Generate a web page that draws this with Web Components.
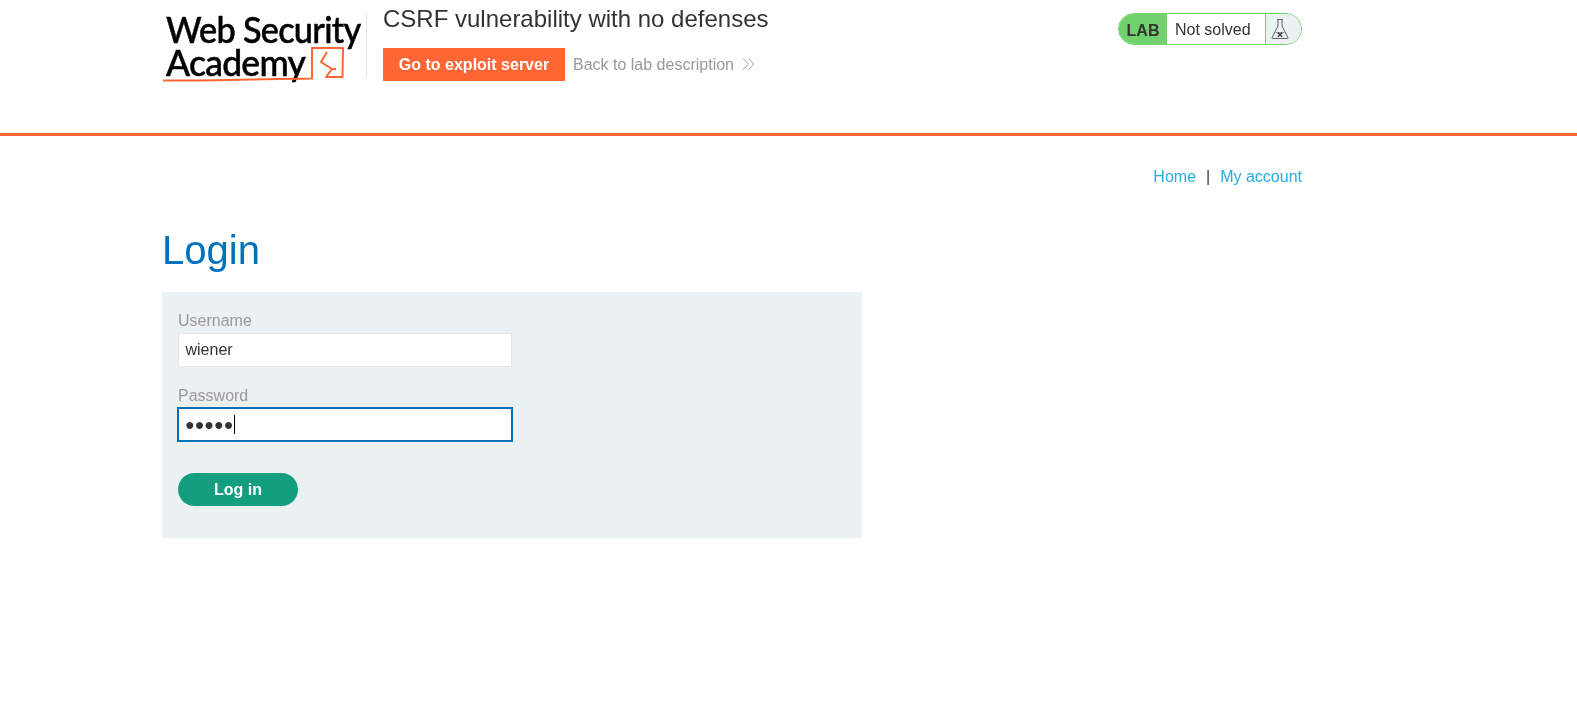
<!DOCTYPE html>
<html><head><meta charset="utf-8">
<style>
html,body{margin:0;padding:0;background:#fff;font-family:"Liberation Sans",Arial,sans-serif;color:#333332;font-size:16px}
</style></head><body>
<template id="t-logo"><style>
:host{display:block;position:relative;width:204px;flex:none;font-family:Lato,"Open Sans",sans-serif;color:#000;border-right:1px solid #e6e6e6;margin-top:12px;height:65px}
.l{font-size:37px;line-height:33px;letter-spacing:-.8px;font-weight:500;white-space:nowrap;margin-left:4px;transform-origin:0 50%;-webkit-text-stroke:.5px #000}
.a{transform:scaleX(.928)}.b{transform:scaleX(.96)}
svg{position:absolute;left:0;top:30px;overflow:visible}
</style><div class="l a">Web Security</div><div class="l b">Academy</div>
<svg width="182" height="45" viewBox="0 0 182 45" fill="none" stroke="#ff6633" stroke-width="2" stroke-linejoin="round"><path d="M1 38.500C40 39 100 37 150 36.500V6L181 6L180.500 35L164 35L170 27L159 20L165 10M170 27H174"/></svg></template>
<template id="t-status"><style>
:host{display:flex;height:32px;box-sizing:border-box;border:1px solid #70d16d;border-radius:16px;overflow:hidden;margin-top:13px;width:184px;background:#fff}
.lab{background:#70d16d;font-weight:700;width:48px;display:flex;align-items:center;justify-content:center;padding-top:3px;box-sizing:border-box}
.txt{flex:1;padding:1px 0 0 8px;display:flex;align-items:center}
.ic{width:36px;background:#ebf0f2;border-left:1px solid #70d16d;display:flex;align-items:center;padding-left:5px;box-sizing:border-box}
</style><div class="lab">LAB</div><div class="txt">Not solved</div><div class="ic"><svg width="18" height="22" viewBox="0 0 18 22" fill="none" stroke="#555" stroke-width=".9"><path d="M6 1.500h6M7 1.500v6.500L1.200 19.500c-.3.700 0 1 .8 1h14c.8 0 1.100-.3.800-1L11 8V1.500"/><path d="M3.500 14.500h11" stroke="#999"/><path d="M6.800 14.500l4.400 4.400M11.200 14.500l-4.400 4.400" stroke="#333332" stroke-width="1.300"/></svg></div></template>
<template id="t-header"><style>
:host{display:block;height:133px;border-bottom:3px solid #ff6633}
.in{display:flex;margin-left:162px;width:1140px}
.mid{margin-left:16px;flex:1}
h2{margin:0;font-weight:400;font-size:24px;line-height:38px;color:#333332}
.row{display:flex;align-items:center;margin-top:10px}
.btn{background:#ff6633;color:#fff;font-weight:700;height:33px;width:182px;display:flex;align-items:center;justify-content:center;white-space:nowrap}
.back{color:#999;margin-left:8px;display:flex;align-items:center;gap:8px}
.back svg{margin-top:-2px}
</style><div class="in"><acad-logo></acad-logo><div class="mid"><h2>CSRF vulnerability with no defenses</h2><div class="row"><div class="btn">Go to exploit server</div><div class="back">Back to lab description<svg width="13" height="14" viewBox="0 0 14 14" fill="none" stroke="#999" stroke-width="1"><path d="M1 1l6 6-6 6M7 1l6 6-6 6"/></svg></div></div></div><lab-status></lab-status></div></template>
<template id="t-nav"><style>
:host{display:flex;justify-content:flex-end;margin:32px 0 0 162px;width:1140px;line-height:18px;gap:10px;color:#333332}
a{color:#29abe2;text-decoration:none}
</style><a>Home</a><span>|</span><a>My account</a></template>
<template id="t-form"><style>
:host{display:block;margin-left:162px;width:700px;height:246px;box-sizing:border-box;background:#ebf0f2;padding:20px 16px 0}
label{display:block;color:#999;line-height:18px}
.f{box-sizing:border-box;width:334px;height:34px;background:#fff;border:1px solid #e6e6e6;padding:0 6.500px;display:flex;align-items:center;margin-top:3px;margin-bottom:20px;color:#333332}
.pw{border-color:#0071bc;box-shadow:0 0 0 1px #0071bc;height:33px;margin-bottom:0;padding:0 6px}
.dots{font-size:16px;white-space:nowrap}
.caret{width:1px;height:19px;background:#000;margin-left:1px}
.go{margin-top:32px;width:120px;height:33px;border-radius:17px;background:#129e7f;color:#fff;font-weight:700;display:flex;align-items:center;justify-content:center}
</style><label>Username</label><div class="f">wiener</div><label>Password</label><div class="f pw"><span class="dots">●●●●●</span><span class="caret"></span></div><div class="go">Log in</div></template>
<template id="t-page"><style>
:host{display:block;will-change:transform}
h1{margin:41px 0 19px 162px;font-weight:400;font-size:40px;line-height:46px;color:#0071bc}
</style><site-header></site-header><site-nav></site-nav><h1>Login</h1><login-form></login-form></template>
<lab-page></lab-page>
<script>
function def(tag,id){customElements.define(tag,class extends HTMLElement{constructor(){super();this.attachShadow({mode:"open"}).appendChild(document.getElementById(id).content.cloneNode(true));}});}
def("acad-logo","t-logo");def("lab-status","t-status");def("site-header","t-header");def("site-nav","t-nav");def("login-form","t-form");def("lab-page","t-page");
</script></body></html>
